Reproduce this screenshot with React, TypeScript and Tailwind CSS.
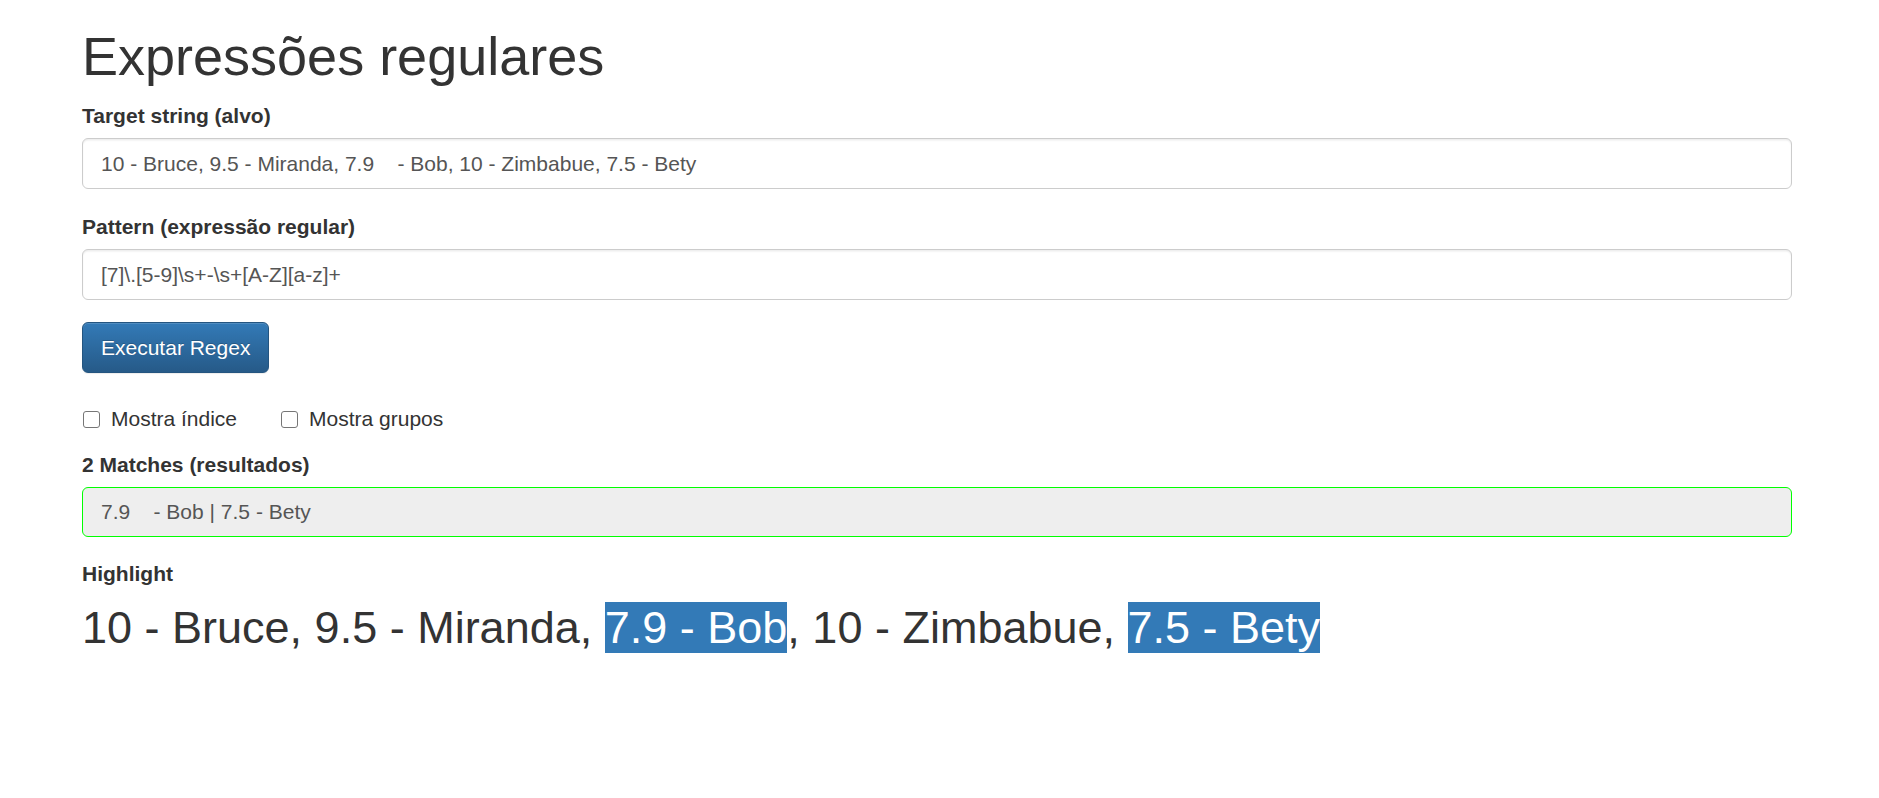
import React, { useState } from 'react';

const target = '10 - Bruce, 9.5 - Miranda, 7.9    - Bob, 10 - Zimbabue, 7.5 - Bety';
const pattern = '[7]\\.[5-9]\\s+-\\s+[A-Z][a-z]+';

const Checkbox: React.FC<{ label: string; checked: boolean; onChange: () => void }> = ({ label, checked, onChange }) => (
  <label className="flex items-center h-[30px] cursor-pointer" onClick={onChange}>
    <span className={`ml-[1px] w-[17px] h-[17px] rounded-[3px] border border-[#767676] ${checked ? 'bg-[#0075ff] border-[#0075ff]' : 'bg-white'}`} />
    <span className="ml-[11px] text-[21px] leading-[30px]">{label}</span>
  </label>
);

const App: React.FC = () => {
  const [showIndex, setShowIndex] = useState(false);
  const [showGroups, setShowGroups] = useState(false);

  return (
    <div className="min-h-screen bg-white pt-[27px] font-['Liberation_Sans',Arial,sans-serif] text-[#333]">
      <div className="w-[1710px] ml-[82px]">
        <h1 className="text-[54px] leading-[59px] font-normal mb-[15px]">Expressões regulares</h1>

        <div className="mb-[23px]">
          <div className="text-[21px] leading-[30px] font-bold mb-[7px]">Target string (alvo)</div>
          <div className="h-[51px] rounded-[6px] border border-[#ccc] shadow-[inset_0_1.5px_1.5px_rgba(0,0,0,0.075)] px-[18px] flex items-center text-[21px] leading-[30px] text-[#555] whitespace-pre">
            {target}
          </div>
        </div>

        <div className="mb-[22px]">
          <div className="text-[21px] leading-[30px] font-bold mb-[7px]">Pattern (expressão regular)</div>
          <div className="h-[51px] rounded-[6px] border border-[#ccc] shadow-[inset_0_1.5px_1.5px_rgba(0,0,0,0.075)] px-[18px] flex items-center text-[21px] leading-[30px] text-[#555] whitespace-pre">
            {pattern}
          </div>
        </div>

        <button className="h-[51px] px-[18px] rounded-[6px] border border-[#245580] bg-gradient-to-b from-[#337ab7] to-[#265a88] text-white text-[21px] leading-[30px] [text-shadow:0_-1px_0_rgba(0,0,0,0.2)] shadow-[inset_0_1px_0_rgba(255,255,255,0.15),0_1px_1px_rgba(0,0,0,0.075)]">
          Executar Regex
        </button>

        <div className="flex items-center gap-[43px] mt-[31px]">
          <Checkbox label="Mostra índice" checked={showIndex} onChange={() => setShowIndex(v => !v)} />
          <Checkbox label="Mostra grupos" checked={showGroups} onChange={() => setShowGroups(v => !v)} />
        </div>

        <div className="mt-[16px] mb-[22px]">
          <div className="text-[21px] leading-[30px] font-bold mb-[7px]">2 Matches (resultados)</div>
          <div className="h-[50px] rounded-[6px] border border-[#00ff00] bg-[#eee] px-[18px] flex items-center text-[21px] leading-[30px] text-[#555] whitespace-pre">
            {'7.9    - Bob | 7.5 - Bety'}
          </div>
        </div>

        <div className="text-[21px] leading-[30px] font-bold mb-[13.5px]">Highlight</div>
        <h2 className="text-[45px] leading-[49.5px] font-normal">
          10 - Bruce, 9.5 - Miranda, <span className="bg-[#337ab7] text-white">7.9 - Bob</span>, 10 - Zimbabue,{' '}
          <span className="bg-[#337ab7] text-white">7.5 - Bety</span>
        </h2>
      </div>
    </div>
  );
};

export default App;
